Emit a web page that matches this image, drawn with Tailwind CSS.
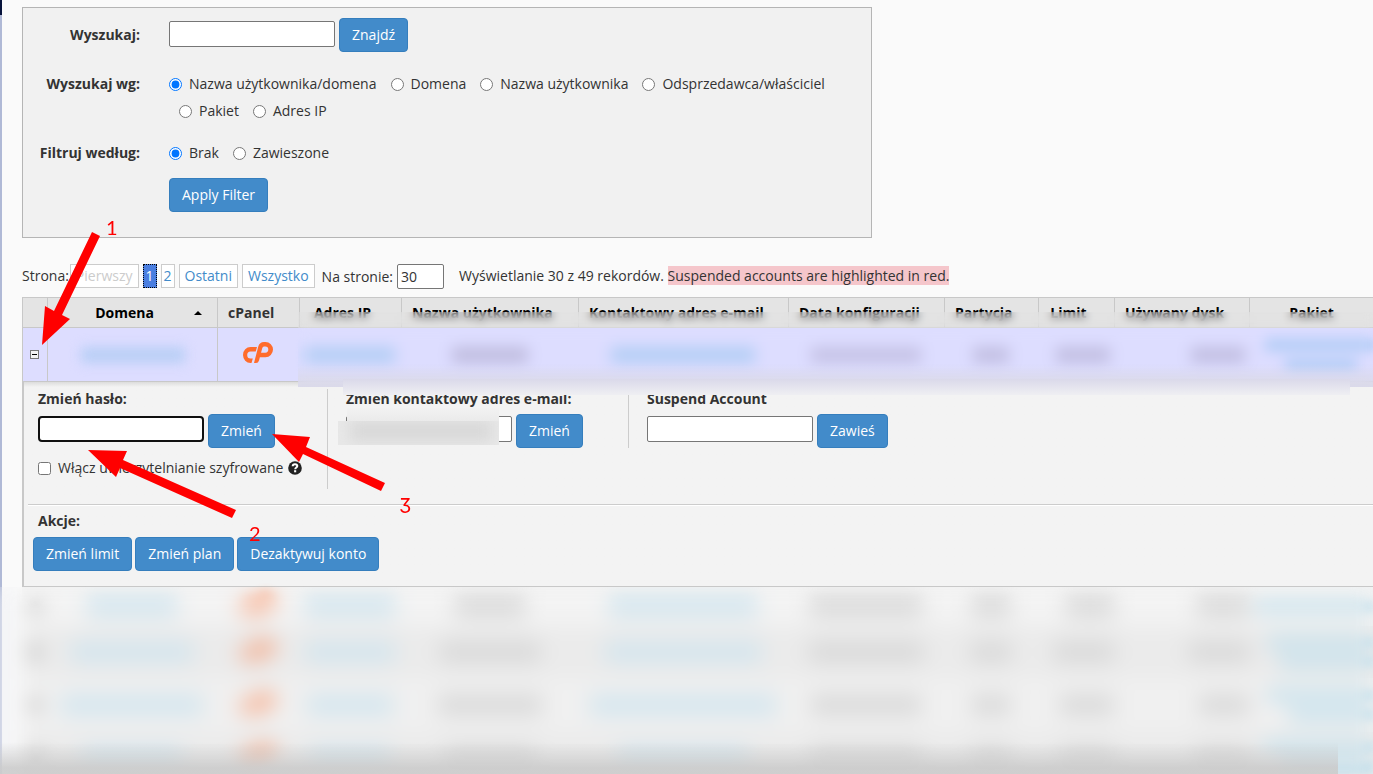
<!DOCTYPE html>
<html lang="pl">
<head>
    <meta charset="UTF-8">
    <meta name="viewport" content="width=device-width, initial-scale=1.0">
    <title>Lista kont</title>
    <script src="https://cdn.jsdelivr.net/npm/@tailwindcss/browser@4"></script>
</head>
<body class="bg-[#fafafa] font-['Open_Sans',sans-serif] text-sm leading-5 text-[#333]">
    <div class="relative flex h-screen overflow-hidden">
        <!-- Edge of the side menu -->
        <div class="w-[2px] shrink-0 bg-[#b0b9d6]">
            <div class="h-[15px] bg-[#07133b]"></div>
        </div>

        <main class="min-w-0 flex-1 pl-5 pt-[7px]">
            <!-- Search form -->
            <form class="max-w-[850px] border border-[#b5b5b5] bg-[#f1f1f1] pt-[10px] pb-[25px]">
                <div class="grid grid-cols-[117px_1fr] gap-x-[29px]">
                    <label for="search" class="pt-[7px] text-right font-bold">Wyszukaj:</label>
                    <div class="flex items-start gap-1">
                        <input id="search" type="text" class="mt-[3px] h-[26px] w-[166px] rounded-xs border border-[#767676] bg-white px-1">
                        <button type="button" class="h-[34px] rounded-sm border border-[#357ebd] bg-[#428bca] px-3 text-white">Znajdź</button>
                    </div>

                    <div class="mt-[22px] text-right font-bold">Wyszukaj wg:</div>
                    <div class="mt-[22px]">
                        <div class="flex flex-wrap gap-x-[14px]">
                            <label class="flex items-center gap-[7px]"><input type="radio" name="type" class="size-[13px]" checked>Nazwa użytkownika/domena</label>
                            <label class="flex items-center gap-[7px]"><input type="radio" name="type" class="size-[13px]">Domena</label>
                            <label class="flex items-center gap-[7px]"><input type="radio" name="type" class="size-[13px]">Nazwa użytkownika</label>
                            <label class="flex items-center gap-[7px]"><input type="radio" name="type" class="size-[13px]">Odsprzedawca/właściciel</label>
                        </div>
                        <div class="mt-[7px] flex gap-x-[14px] pl-[10px]">
                            <label class="flex items-center gap-[7px]"><input type="radio" name="type" class="size-[13px]">Pakiet</label>
                            <label class="flex items-center gap-[7px]"><input type="radio" name="type" class="size-[13px]">Adres IP</label>
                        </div>
                    </div>

                    <div class="mt-[22px] text-right font-bold">Filtruj według:</div>
                    <div class="mt-[22px]">
                        <div class="flex gap-x-[14px]">
                            <label class="flex items-center gap-[7px]"><input type="radio" name="filter" class="size-[13px]" checked>Brak</label>
                            <label class="flex items-center gap-[7px]"><input type="radio" name="filter" class="size-[13px]">Zawieszone</label>
                        </div>
                        <button type="button" class="mt-[15px] h-[34px] rounded-sm border border-[#357ebd] bg-[#428bca] px-3 text-white">Apply Filter</button>
                    </div>
                </div>
            </form>

            <!-- Pager -->
            <div class="mt-[26px] flex h-[33px] items-start whitespace-nowrap">
                <span class="mt-[2px] mr-px">Strona:</span>
                <div class="flex gap-1">
                    <span class="h-6 border border-[#ccc] bg-white px-[5px] leading-[22px] text-[#ccc]">Pierwszy</span>
                    <a href="#" class="h-6 border border-dotted border-black bg-[#4a7ee0] px-[2px] leading-[22px] text-white">1</a>
                    <a href="#" class="h-6 border border-[#ccc] bg-white px-[2px] leading-[22px] text-[#428bca]">2</a>
                    <a href="#" class="h-6 border border-[#ccc] bg-white px-[5px] leading-[22px] text-[#428bca]">Ostatni</a>
                    <a href="#" class="h-6 border border-[#ccc] bg-white px-[5px] leading-[22px] text-[#428bca]">Wszystko</a>
                </div>
                <label for="per-page" class="mt-[3px] ml-[7px]">Na stronie:</label>
                <input id="per-page" type="text" value="30" class="ml-1 h-[25px] w-[47px] rounded-xs border border-[#767676] bg-white px-[3px]">
                <span class="mt-[2px] ml-[15px]">Wyświetlanie 30 z 49 rekordów. <span class="bg-[#f5c6cb]">Suspended accounts are highlighted in red.</span></span>
            </div>

            <!-- Accounts -->
            <div class="relative">
                <table class="w-full table-fixed border-separate border-spacing-0">
                    <colgroup>
                        <col class="w-[25px]">
                        <col class="w-[170px]">
                        <col class="w-[82px]">
                        <col class="w-[102px]">
                        <col class="w-[177px]">
                        <col class="w-[210px]">
                        <col class="w-[156px]">
                        <col class="w-[94px]">
                        <col class="w-[76px]">
                        <col class="w-[135px]">
                        <col>
                    </colgroup>
                    <thead>
                        <tr class="h-[30px] bg-[#e4e4e4] whitespace-nowrap text-black">
                            <th class="border-t border-l border-[#c8c8c8]"></th>
                            <th class="relative border-t border-l border-[#c8c8c8] pr-[26px] pl-[10px]">Domena
                                <svg class="absolute top-[13px] right-[15px] h-1 w-2" viewBox="0 0 8 4"><path d="M0 4 4 0l4 4z" fill="#000"/></svg>
                            </th>
                            <th class="border-t border-l border-[#c8c8c8] px-[10px] text-left text-[#333]">cPanel</th>
                            <th class="border-t border-l border-[#c8c8c8] pr-[26px] pl-[10px]">Adres IP</th>
                            <th class="border-t border-l border-[#c8c8c8] pr-[26px] pl-[10px]">Nazwa użytkownika</th>
                            <th class="border-t border-l border-[#c8c8c8] pr-[26px] pl-[10px]">Kontaktowy adres e-mail</th>
                            <th class="border-t border-l border-[#c8c8c8] pr-[26px] pl-[10px]">Data konfiguracji</th>
                            <th class="border-t border-l border-[#c8c8c8] pr-[26px] pl-[10px]">Partycja</th>
                            <th class="border-t border-l border-[#c8c8c8] pr-[26px] pl-[10px]">Limit</th>
                            <th class="border-t border-l border-[#c8c8c8] pr-[26px] pl-[10px]">Używany dysk</th>
                            <th class="border-t border-l border-[#c8c8c8] px-[10px]">Pakiet</th>
                        </tr>
                    </thead>
                    <tbody id="accounts">
                        <tr class="h-[54px] bg-[#ddddff]">
                            <td class="border-t border-l border-[#c8c8c8]">
                                <button type="button" aria-label="Zwiń" class="ml-[7px] flex size-[9px] items-center justify-center border border-[#777] bg-[#f3f3f3]"><span class="h-px w-[5px] bg-black"></span></button>
                            </td>
                            <td class="border-t border-l border-[#c8c8c8]"><div class="mx-auto h-4 w-[104px] bg-[#b9cff6] blur-[6px]"></div></td>
                            <td class="border-t border-l border-[#c8c8c8]">
                                <svg class="ml-[25px] mb-[5px] h-[21px] w-[30px]" viewBox="0 0 30 21"><use href="#cp"/></svg>
                            </td>
                            <td class="border-t border-[#c8c8c8]"><div class="mx-auto h-4 w-[90px] bg-[#b3cef5] blur-[5px]"></div></td>
                            <td class="border-t border-[#c8c8c8]"><div class="mx-auto h-4 w-[76px] bg-[#bfbcde] blur-[5px]"></div></td>
                            <td class="border-t border-[#c8c8c8]"><div class="mx-auto h-4 w-[144px] bg-[#b3cef5] blur-[5px]"></div></td>
                            <td class="border-t border-[#c8c8c8]"><div class="mx-auto h-4 w-[110px] bg-[#c5c2e5] blur-[5px]"></div></td>
                            <td class="border-t border-[#c8c8c8]"><div class="mx-auto h-4 w-[36px] bg-[#c1bee1] blur-[5px]"></div></td>
                            <td class="border-t border-[#c8c8c8]"><div class="mr-1 ml-auto h-4 w-[54px] bg-[#c1bee1] blur-[5px]"></div></td>
                            <td class="border-t border-[#c8c8c8]"><div class="mr-1 ml-auto h-4 w-[54px] bg-[#c1bee1] blur-[5px]"></div></td>
                            <td class="border-t border-[#c8c8c8]">
                                <div class="ml-4 h-3 bg-[#b0ccf6] blur-[3px]"></div>
                                <div class="mt-2 mr-4 ml-9 h-3 bg-[#b0ccf6] blur-[3px]"></div>
                            </td>
                        </tr>
                        <tr>
                            <td colspan="11" class="border-y border-l-2 border-[#c8c8c8] bg-[#f3f3f3] bg-linear-to-b from-[#dcdcdc] to-[#f3f3f3] to-[5px] p-0">
                                <div class="flex items-start pt-[7px] pl-[14px]">
                                    <div class="h-[100px] w-[290px] border-r border-[#ccc]">
                                        <label for="password" class="block font-bold">Zmień hasło:</label>
                                        <div class="mt-[5px] flex items-start gap-1">
                                            <input id="password" type="password" class="mt-[2px] h-[26px] w-[166px] rounded-sm border-2 border-[#101010] bg-white px-1">
                                            <button type="button" class="h-[34px] rounded-sm border border-[#357ebd] bg-[#428bca] px-3 text-white">Zmień</button>
                                        </div>
                                        <div class="mt-[10px] flex items-center">
                                            <label class="flex items-center gap-[7px] whitespace-nowrap"><input type="checkbox" class="size-[13px]">Włącz uwierzytelnianie szyfrowane</label>
                                            <svg class="ml-[5px] size-[14px]" viewBox="0 0 14 14"><circle cx="7" cy="7" r="6.8" fill="#222"/><path d="M4.700 5.300C4.700 3.900 5.700 3.200 7 3.200s2.300.7 2.300 1.900C9.300 6.600 7.200 6.500 7.200 8.300" fill="none" stroke="#fff" stroke-width="2"/><path d="M6.100 9.200h2.100v2.100H6.100z" fill="#fff"/></svg>
                                        </div>
                                    </div>
                                    <div class="w-[301px] border-r border-[#ccc] pl-[18px]">
                                        <label for="email" class="block font-bold whitespace-nowrap">Zmień kontaktowy adres e-mail:</label>
                                        <div class="relative mt-[5px] flex items-start gap-1">
                                            <input id="email" type="text" class="mt-[2px] h-[26px] w-[166px] rounded-xs border border-[#767676] bg-white px-1">
                                            <button type="button" class="h-[34px] rounded-sm border border-[#357ebd] bg-[#428bca] px-3 text-white">Zmień</button>
                                            <div class="absolute -top-[6px] left-px h-[14px] w-[152px] bg-linear-to-b from-[#f2f2f2] to-[#eaeaea]"></div>
                                            <div class="absolute top-[7px] -left-2 h-6 w-[161px] overflow-hidden bg-[#e8e8e8]">
                                                <div class="ml-3 h-5 w-[142px] bg-[#d8d8d8] blur-[7px]"></div>
                                            </div>
                                        </div>
                                    </div>
                                    <div class="pl-[18px]">
                                        <label for="suspend" class="block font-bold">Suspend Account</label>
                                        <div class="mt-[5px] flex items-start gap-1">
                                            <input id="suspend" type="text" class="mt-[2px] h-[26px] w-[166px] rounded-xs border border-[#767676] bg-white px-1">
                                            <button type="button" class="h-[34px] rounded-sm border border-[#357ebd] bg-[#428bca] px-3 text-white">Zawieś</button>
                                        </div>
                                    </div>
                                </div>
                                <hr class="mt-[15px] ml-1 border-t border-b border-t-[#ccc] border-b-white">
                                <div class="mt-[5px] pl-[14px] font-bold">Akcje:</div>
                                <div class="mt-[6px] mb-[15px] flex gap-[3px] pl-[9px]">
                                    <button type="button" class="h-[34px] rounded-sm border border-[#357ebd] bg-[#428bca] px-3 text-white">Zmień limit</button>
                                    <button type="button" class="h-[34px] rounded-sm border border-[#357ebd] bg-[#428bca] px-3 text-white">Zmień plan</button>
                                    <button type="button" class="h-[34px] rounded-sm border border-[#357ebd] bg-[#428bca] px-3 text-white">Dezaktywuj konto</button>
                                </div>
                            </td>
                        </tr>
                    </tbody>
                </table>

                <!-- Frosted covers over private data -->
                <div class="absolute top-[15px] right-0 left-[276px] h-[16px] bg-[#e0e0e0]/30 backdrop-blur-[4px]"></div>
                <div class="absolute top-[31px] right-0 left-[276px] h-[59px] bg-linear-to-b from-[#d9d8ee]/0 from-60% to-[#dad9ea] backdrop-blur-[6px]"></div>
                <div class="absolute top-[82px] right-[23px] left-[321px] h-[16px] bg-linear-to-b from-[#dad9ea] to-[#efeff2]"></div>
                <div class="absolute top-[290px] right-0 bottom-0 -left-[22px] backdrop-blur-[10px]"></div>
            </div>
        </main>

        <!-- Shade at the window's lower edge -->
        <div class="absolute right-[35px] bottom-0 left-0 h-8 bg-linear-to-b from-[#cccccc]/0 to-[#cccccc]/90 to-80%"></div>

        <!-- Numbered pointers -->
        <svg class="pointer-events-none absolute top-0 left-0 h-[560px] w-[440px] font-[Lato,sans-serif] text-xl" fill="#f00">
            <polygon points="92,232 100,236 62,315 70,319 42,345 45,306 54,311"/>
            <polygon points="88,450 127,451 123,460 236,510 232,518 120,468 116,477"/>
            <polygon points="272,434 310,437 306,447 385,483 381,491 303,454 299,462"/>
            <text x="106" y="235">1</text>
            <text x="249" y="541">2</text>
            <text x="399" y="513" class="font-[Inter,sans-serif] [font-feature-settings:'cv09']">3</text>
        </svg>
    </div>

    <svg class="hidden">
        <symbol id="cp" viewBox="0 0 30 21">
            <g fill="#ff6c2c">
                <path d="M14 5H7.500A7.500 8 0 0 0 0 13a7.500 8 0 0 0 7.500 8h1L9.800 16.500H7.500a3.300 3.500 0 0 1 0-7h5.200z"/>
                <path d="M11 21 15.300 4.500Q16.500 0 21 0h1.500a7.500 7.600 0 0 1 0 15.200h-5.700L18 10.700h4.300a3 3.100 0 0 0 0-6.200H21q-1.300 0-1.700 1.500L16 18.500Q15.300 21 13 21z"/>
            </g>
        </symbol>
    </svg>

    <script>
        // Widths of the covered values, one entry per account
        const rows = [
            { h: 'h-[39px]', bg: 'bg-[#f3f3f3]', widths: [90, 90, 70, 148, 112, 38, 48, 52], lines: [118] },
            { h: 'h-[52px]', bg: 'bg-[#ebebeb]', widths: [122, 90, 100, 156, 114, 40, 60, 60], lines: [106, 94] },
            { h: 'h-[54px]', bg: 'bg-[#f0f0f0]', widths: [142, 86, 104, 186, 110, 38, 54, 50], lines: [106, 84] },
            { h: 'h-[50px]', bg: 'bg-[#ebebeb]', widths: [100, 80, 90, 130, 110, 38, 54, 54], lines: [110, 90] }
        ];
        const blue = 'bg-[#d2e5ee]';
        const grey = 'bg-[#d8d8d8]';
        const colors = [blue, blue, grey, blue, grey, grey, grey, grey];

        rows.forEach(row => {
            const bars = row.widths.map((w, i) => {
                const align = i > 5 ? 'ml-auto' : 'mx-auto';
                return `<div class="${align} h-5 blur-[5px] ${colors[i]}" style="width:${w}px"></div>`;
            });
            const logo = '<svg class="mx-auto mb-1 h-[25px] w-[34px] opacity-70 blur-[5px]" viewBox="0 0 30 21"><use href="#cp"/></svg>';
            const plan = row.lines.map(w => `<div class="my-2 ml-auto h-3 bg-[#c3e0ec] blur-[3px]" style="width:${w}px"></div>`).join('');
            const cells = ['<div class="mx-auto size-[10px] bg-[#aaa] blur-[2px]"></div>', bars[0], logo, ...bars.slice(1), plan];
            const tr = document.createElement('tr');
            tr.className = `${row.h} ${row.bg}`;
            tr.innerHTML = cells.map(c => `<td class="p-0">${c}</td>`).join('');
            document.getElementById('accounts').appendChild(tr);
        });
    </script>
</body>
</html>
